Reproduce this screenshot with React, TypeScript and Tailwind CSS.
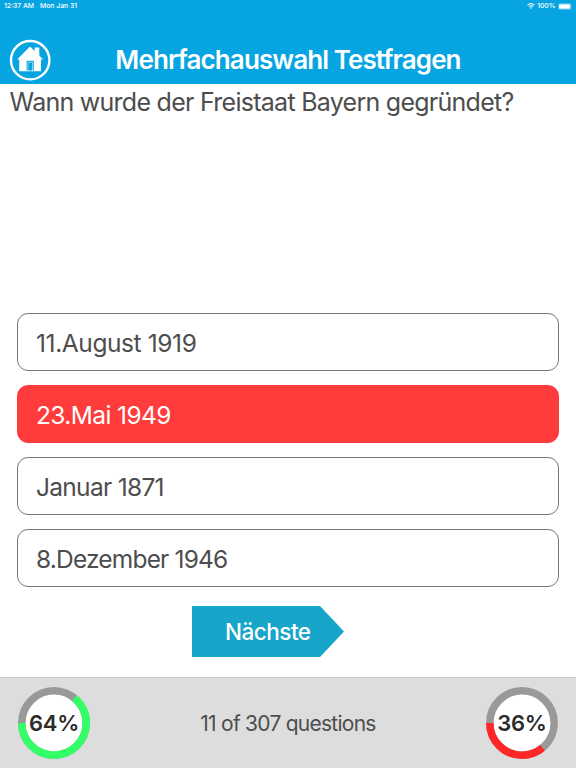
import React from 'react';
import clsx from 'clsx';

interface Answer {
    id: number;
    text: string;
    selected?: boolean;
    className: string;
}

interface ScoreRingProps {
    percent: number;
    color: string;
}

const answers: Answer[] = [
    { id: 1, text: "11.August 1919", className: "tracking-[-0.4px]" },
    { id: 2, text: "23.Mai 1949", selected: true, className: "tracking-[-0.6px]" },
    { id: 3, text: "Januar 1871", className: "tracking-[-0.7px]" },
    { id: 4, text: "8.Dezember 1946", className: "tracking-[-0.82px]" },
];

const HomeIcon: React.FC = () => (
    <svg viewBox="0 0 42 42" className="h-[42px] w-[42px]">
        <circle cx="21.2" cy="21.2" r="19.2" fill="none" stroke="white" strokeWidth="2.4" />
        <path
            fill="white"
            fillRule="evenodd"
            d="M21 7.6 L25.6 12 V8.4 H30.3 V16.6 L34 20.6 H32 V32.2 H10.2 V20.6 H8.2 Z M17.6 21.8 V32.2 H24.8 V21.8 Z"
        />
        <path fill="none" stroke="white" strokeOpacity="0.65" strokeWidth="0.8" d="M18.9 32.2 V23.2 H23.5 V32.2" />
        <path stroke="white" strokeWidth="0.8" d="M17 31.8 H25" />
    </svg>
);

const WifiIcon: React.FC = () => (
    <svg viewBox="0 0 8 6" className="h-[6px] w-[8px]" fill="none" stroke="white" strokeWidth="1.1">
        <path d="M0.5 2.1 Q4 -0.9 7.5 2.1" />
        <path d="M1.9 3.6 Q4 1.8 6.1 3.6" />
        <path d="M4 6 L2.9 4.7 Q4 3.9 5.1 4.7 Z" fill="white" stroke="none" />
    </svg>
);

const BatteryIcon: React.FC = () => (
    <svg viewBox="0 0 15 7" className="h-[7px] w-[15px]">
        <rect x="0.3" y="0.5" width="12.7" height="6" rx="1.6" fill="none" stroke="white" strokeOpacity="0.5" strokeWidth="0.5" />
        <rect x="1" y="1.2" width="11.3" height="4.6" rx="0.9" fill="white" />
        <path d="M13.7 2.5 Q14.6 3.5 13.7 4.5 Z" fill="white" fillOpacity="0.6" />
    </svg>
);

// Arc starts at nine o'clock and runs counter-clockwise
const ScoreRing: React.FC<ScoreRingProps> = ({ percent, color }) => (
    <div className="grid h-[72px] w-[72px] place-items-center">
        <svg viewBox="0 0 72 72" className="col-start-1 row-start-1 h-[72px] w-[72px]">
            <circle cx="36" cy="36" r="32.2" fill="white" stroke="#999999" strokeWidth="7.5" />
            <circle
                cx="36"
                cy="36"
                r="32.2"
                fill="none"
                stroke={color}
                strokeWidth="7.5"
                pathLength="100"
                strokeDasharray={`${percent} 100`}
                transform="translate(72 0) scale(-1 1)"
            />
        </svg>
        <span className="z-10 col-start-1 row-start-1 text-[22px] leading-none font-semibold tracking-[-0.3px] text-[#2b2b2b]">
            {percent}%
        </span>
    </div>
);

const App: React.FC = () => {
    return (
        <div className="flex h-[768px] w-[576px] flex-col overflow-hidden bg-white font-['Inter','Liberation_Sans',sans-serif] whitespace-nowrap text-[#4d4d4d]">
            <header className="flex h-[84px] shrink-0 flex-col bg-[#06a5e2] text-white">
                <div className="flex h-3 items-center justify-between pr-[3px] pl-1 text-[6.8px] leading-3 font-medium">
                    <div className="flex gap-[6px]">
                        <span>12:37 AM</span>
                        <span>Mon Jan 31</span>
                    </div>
                    <div className="flex items-center gap-[2.5px]">
                        <WifiIcon />
                        <span>100%</span>
                        <BatteryIcon />
                    </div>
                </div>
                <div className="mt-[27px] grid grid-cols-[42px_1fr_42px] items-center px-[9px]">
                    <button aria-label="Home">
                        <HomeIcon />
                    </button>
                    <h1 className="text-center text-[26px] leading-[42px] font-semibold tracking-[-0.9px]">
                        Mehrfachauswahl Testfragen
                    </h1>
                </div>
            </header>

            <main className="flex grow flex-col">
                <p className="h-[229px] pt-[3px] pl-[9.5px] text-[25px] leading-[30px] tracking-[-0.73px]">
                    Wann wurde der Freistaat Bayern gegründet?
                </p>
                <div className="flex flex-col gap-[14px] px-[17px]">
                    {answers.map((answer) => (
                        <button
                            key={answer.id}
                            className={clsx(
                                "h-[58px] rounded-[11px] border pt-0.5 pl-[18px] text-left text-[24.5px] leading-none",
                                answer.selected ? "border-[#ff3b3b] bg-[#ff3b3b] text-white" : "border-[#777777] bg-white",
                                answer.className
                            )}
                        >
                            {answer.text}
                        </button>
                    ))}
                </div>
                <button className="mt-[19px] ml-[192px] h-[51px] w-[152px] shrink-0 bg-[#17a5ca] pl-[33px] text-left text-[22.5px] font-medium tracking-[-0.5px] text-white [clip-path:polygon(0_0,128px_0,100%_50%,128px_100%,0_100%)]">
                    Nächste
                </button>
            </main>

            <footer className="flex h-[91px] shrink-0 items-center justify-between border-t border-[#c8c8c8] bg-[#dddddd] px-[18px]">
                <ScoreRing percent={64} color="#33ff66" />
                <span className="pt-0.5 text-[21px] tracking-[-0.74px]">11 of 307 questions</span>
                <ScoreRing percent={36} color="#ff2626" />
            </footer>
        </div>
    );
};

export default App;
